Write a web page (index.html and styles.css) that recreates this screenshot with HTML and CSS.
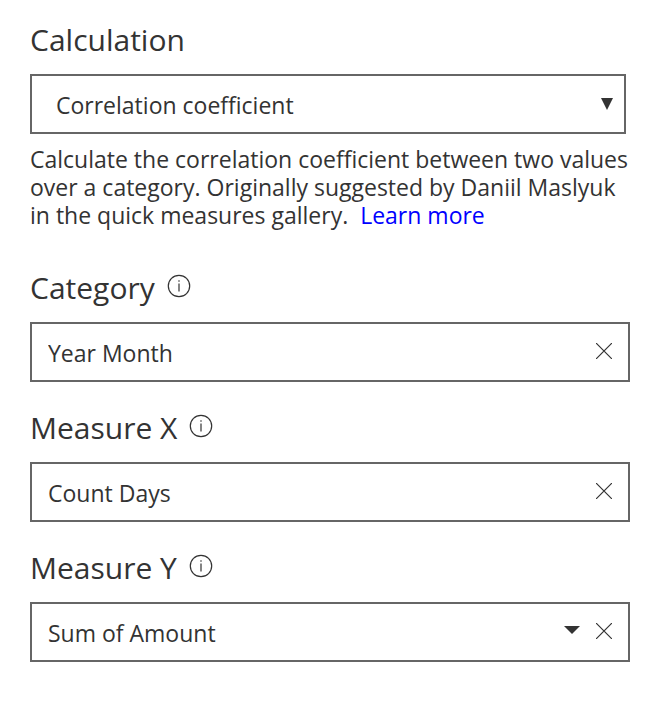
FILE: index.html
```html
<!DOCTYPE html>
<html lang="en">
<head>
    <meta charset="UTF-8">
    <meta name="viewport" content="width=device-width, initial-scale=1.0">
    <title>Quick measures</title>
    <link rel="stylesheet" href="styles.css">
</head>
<body>
    <form class="quick-measure">
        <section class="calculation">
            <label class="title" for="calculation">Calculation</label>
            <div class="select-box">
                <select id="calculation">
                    <option selected>Correlation coefficient</option>
                </select>
                <svg class="select-arrow" viewBox="0 0 12 12" aria-hidden="true"><path d="M0 0H12L6 12Z"/></svg>
            </div>
            <p class="description">Calculate the correlation coefficient between two values over a category. Originally suggested by Daniil Maslyuk in the quick measures gallery.&nbsp; <a href="#">Learn more</a></p>
        </section>

        <section class="field">
            <div class="field-header">
                <label class="title" for="category">Category</label>
                <button type="button" class="info" aria-label="About category">
                    <svg viewBox="0 0 24 24"><circle cx="12" cy="12" r="10.7"/><path d="M12 9.5V17.5M12 6.2V7.8"/></svg>
                </button>
            </div>
            <div class="field-box">
                <input type="text" id="category" value="Year Month">
                <button type="button" class="remove" aria-label="Remove category">
                    <svg viewBox="0 0 16 16"><path d="M0 0L16 16M16 0L0 16"/></svg>
                </button>
            </div>
        </section>

        <section class="field">
            <div class="field-header">
                <label class="title" for="measureX">Measure X</label>
                <button type="button" class="info" aria-label="About measure X">
                    <svg viewBox="0 0 24 24"><circle cx="12" cy="12" r="10.7"/><path d="M12 9.5V17.5M12 6.2V7.8"/></svg>
                </button>
            </div>
            <div class="field-box">
                <input type="text" id="measureX" value="Count Days">
                <button type="button" class="remove" aria-label="Remove measure X">
                    <svg viewBox="0 0 16 16"><path d="M0 0L16 16M16 0L0 16"/></svg>
                </button>
            </div>
        </section>

        <section class="field">
            <div class="field-header">
                <label class="title" for="measureY">Measure Y</label>
                <button type="button" class="info" aria-label="About measure Y">
                    <svg viewBox="0 0 24 24"><circle cx="12" cy="12" r="10.7"/><path d="M12 9.5V17.5M12 6.2V7.8"/></svg>
                </button>
            </div>
            <div class="field-box">
                <input type="text" id="measureY" value="Sum of Amount">
                <button type="button" class="options" aria-label="Measure Y options">
                    <svg viewBox="0 0 16 8"><path d="M0 0H16L8 8Z"/></svg>
                </button>
                <button type="button" class="remove" aria-label="Remove measure Y">
                    <svg viewBox="0 0 16 16"><path d="M0 0L16 16M16 0L0 16"/></svg>
                </button>
            </div>
        </section>
    </form>
</body>
</html>
```

FILE: styles.css
```css
* {
    box-sizing: border-box;
}

body {
    margin: 0;
    background-color: #fff;
    color: #333;
    font-family: 'Segoe UI', 'Open Sans', 'Noto Sans', sans-serif;
    font-size: 23px;
}

.quick-measure {
    padding: 20px 38px 20px 30px;
}

.title {
    display: block;
    font-size: 30px;
    line-height: 40px;
}

.select-box {
    position: relative;
    margin: 14px 4px 0 0;
}

select, input {
    width: 100%;
    color: inherit;
    font: inherit;
    outline: none;
}

select {
    display: block;
    height: 60px;
    padding: 2px 40px 0 24px;
    border: 2px solid #666;
    border-radius: 0;
    background-color: #fff;
    appearance: none;
}

.select-arrow {
    position: absolute;
    top: 24px;
    right: 13px;
    width: 12px;
    height: 12px;
    fill: #333;
    pointer-events: none;
}

.description {
    margin: 11px 0 0;
    line-height: 28px;
}

.description a {
    color: #00f;
    text-decoration: none;
}

.field {
    margin-top: 26px;
}

.calculation + .field {
    margin-top: 39px;
}

.field-header {
    display: flex;
    gap: 12px;
}

.field-box {
    display: flex;
    align-items: center;
    height: 60px;
    margin-top: 14px;
    border: 2px solid #666;
}

.field-box input {
    flex: 1;
    min-width: 0;
    height: 100%;
    padding: 2px 16px 0;
    border: none;
    background: transparent;
}

button {
    display: flex;
    align-items: center;
    justify-content: center;
    flex: none;
    padding: 0;
    border: none;
    background: transparent;
    color: inherit;
    cursor: pointer;
}

.info {
    height: 36px;
}

.info svg {
    width: 24px;
    height: 24px;
    fill: none;
    stroke: #333;
    stroke-width: 1.2;
}

.options,
.remove {
    width: 32px;
    height: 56px;
    padding-bottom: 2px;
}

.options svg {
    width: 16px;
    height: 8px;
    margin-bottom: 2px;
    fill: #333;
}

.remove {
    margin-right: 8px;
}

.remove svg {
    width: 16px;
    height: 16px;
    fill: none;
    stroke: #333;
    stroke-width: 1.2;
}
```
